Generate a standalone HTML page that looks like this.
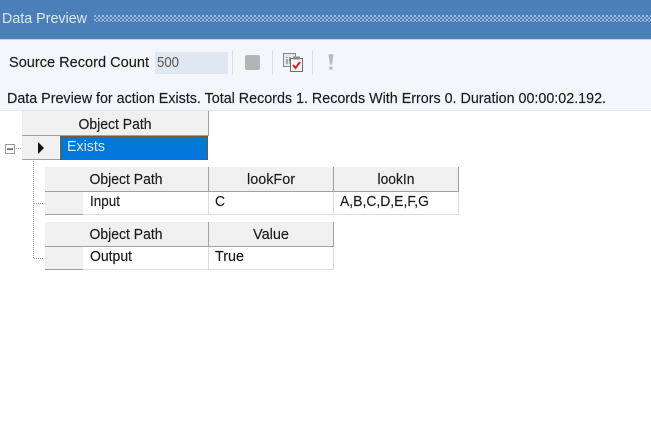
<!DOCTYPE html>
<html><head><meta charset="utf-8"><style>
html,body{margin:0;padding:0;background:#fff;width:651px;height:440px;overflow:hidden}
svg{display:block}
text{font-family:"Liberation Sans",sans-serif;font-size:15px;fill:#1a1a1a;stroke:#1a1a1a;stroke-width:.15px}
.c{text-anchor:middle}
</style></head><body>
<svg width="651" height="440" viewBox="0 0 651 440" xmlns="http://www.w3.org/2000/svg">
<defs><pattern id="d" width="4" height="4" patternUnits="userSpaceOnUse" x="94" y="15"><rect width="2" height="2" x="0" y="0" fill="#9dbbdc"/><rect width="2" height="2" x="2" y="2" fill="#8fb0d4"/></pattern></defs>
<rect width="651" height="440" fill="#fff"/>
<rect width="651" height="39" fill="#4a80b7"/>
<rect y="39" width="651" height="1" fill="#c3d3e6"/>
<rect y="40" width="651" height="70" fill="#f3f6fa"/>
<rect y="110" width="651" height="1" fill="#e2e4e6"/>
<text x="2" y="23" style="fill:#dfe9f4;stroke:none" textLength="85" lengthAdjust="spacingAndGlyphs">Data Preview</text>
<rect x="94" y="15" width="557" height="7" fill="url(#d)"/>

<text x="9" y="67" textLength="140" lengthAdjust="spacingAndGlyphs">Source Record Count</text>
<rect x="155" y="52" width="73" height="22" fill="#dfe7f0"/>
<text x="157" y="67" style="fill:#555;stroke:none" textLength="22" lengthAdjust="spacingAndGlyphs">500</text>
<rect x="232" y="50" width="1" height="25" fill="#dcdfe2"/>
<rect x="272" y="50" width="1" height="25" fill="#dcdfe2"/>
<rect x="312" y="50" width="1" height="25" fill="#dcdfe2"/>
<rect x="245" y="55" width="15" height="15" rx="2" fill="#b4b4b4"/>

<rect x="283.500" y="53.500" width="12" height="13" fill="#e4e8ee" stroke="#7d8792"/>
<path d="M287 57v1M287 59v5M289 60h3M290 57v7" stroke="#5a6a7a" fill="none"/>
<rect x="290.500" y="58.500" width="12" height="13" fill="#f4f4f4" stroke="#6d6d6d"/>
<rect x="293" y="56.500" width="7" height="3" fill="#8a8a8a"/>
<path d="M293 65l2.500 3 4.500-6" stroke="#d9232e" stroke-width="2" fill="none"/>

<path d="M328.500 55.500c0-2 5-2 5 0l-1.500 9h-2z" fill="#bcbcbc"/>
<circle cx="331" cy="68" r="1.800" fill="#bcbcbc"/>

<text x="7" y="103" textLength="599" lengthAdjust="spacingAndGlyphs">Data Preview for action Exists. Total Records 1. Records With Errors 0. Duration 00:00:02.192.</text>

<!-- main grid -->
<rect x="22" y="111" width="187" height="24" fill="#f0f0f0"/>
<rect x="208" y="111" width="1" height="24" fill="#a0a0a0"/>
<rect x="22" y="135" width="187" height="1" fill="#a0a0a0"/>
<text class="c" x="115" y="129" textLength="73" lengthAdjust="spacingAndGlyphs">Object Path</text>
<rect x="22" y="136" width="37" height="24" fill="#f0f0f0"/>
<rect x="22" y="159" width="38" height="1" fill="#a0a0a0"/>
<path d="M38 142l6 6-6 6z" fill="#111"/>
<rect x="60" y="136" width="148" height="24" fill="#0078d7"/>
<rect x="60.500" y="136.500" width="147" height="23" fill="none" stroke="#c8823a" stroke-dasharray="1 1"/>
<rect x="60.500" y="136.500" width="147" height="23" fill="none" stroke="#2c2c2c" stroke-dasharray="1 1" stroke-dashoffset="1"/>
<text x="67" y="151" style="fill:#dcebf9;stroke:none" textLength="38" lengthAdjust="spacingAndGlyphs">Exists</text>

<rect x="5.500" y="144.500" width="9" height="9" fill="#fff" stroke="#9a9a9a"/>
<rect x="7" y="148.500" width="6" height="1.200" fill="#333"/>
<path d="M16 148.500h6" stroke="#999" stroke-dasharray="1 1"/>
<path d="M33.500 161v97.500h10M34 203.500h10" stroke="#999" fill="none" stroke-dasharray="1 1"/>

<!-- child grid 1 -->
<rect x="45" y="167" width="414" height="24" fill="#f0f0f0"/>
<rect x="45" y="191" width="414" height="1" fill="#a0a0a0"/>
<rect x="208" y="167" width="1" height="24" fill="#a0a0a0"/>
<rect x="333" y="167" width="1" height="24" fill="#a0a0a0"/>
<rect x="458" y="167" width="1" height="24" fill="#a0a0a0"/>
<rect x="45" y="192" width="38" height="22" fill="#f0f0f0"/>
<rect x="45" y="214" width="38" height="1" fill="#a0a0a0"/>
<rect x="83" y="214" width="376" height="1" fill="#dcdcdc"/>
<rect x="208" y="192" width="1" height="22" fill="#dcdcdc"/>
<rect x="333" y="192" width="1" height="22" fill="#dcdcdc"/>
<rect x="458" y="192" width="1" height="22" fill="#dcdcdc"/>
<text class="c" x="126" y="184" textLength="73" lengthAdjust="spacingAndGlyphs">Object Path</text>
<text class="c" x="271" y="184" textLength="48" lengthAdjust="spacingAndGlyphs">lookFor</text>
<text class="c" x="396" y="184" textLength="37" lengthAdjust="spacingAndGlyphs">lookIn</text>
<text x="90" y="206" textLength="30" lengthAdjust="spacingAndGlyphs">Input</text>
<text x="215" y="206" textLength="10" lengthAdjust="spacingAndGlyphs">C</text>
<text x="340" y="206" textLength="89" lengthAdjust="spacingAndGlyphs">A,B,C,D,E,F,G</text>

<!-- child grid 2 -->
<rect x="45" y="222" width="289" height="24" fill="#f0f0f0"/>
<rect x="45" y="246" width="289" height="1" fill="#a0a0a0"/>
<rect x="208" y="222" width="1" height="24" fill="#a0a0a0"/>
<rect x="333" y="222" width="1" height="24" fill="#a0a0a0"/>
<rect x="45" y="247" width="38" height="22" fill="#f0f0f0"/>
<rect x="45" y="269" width="38" height="1" fill="#a0a0a0"/>
<rect x="83" y="269" width="251" height="1" fill="#dcdcdc"/>
<rect x="208" y="247" width="1" height="22" fill="#dcdcdc"/>
<rect x="333" y="247" width="1" height="22" fill="#dcdcdc"/>
<text class="c" x="126" y="239" textLength="73" lengthAdjust="spacingAndGlyphs">Object Path</text>
<text class="c" x="271" y="239" textLength="36" lengthAdjust="spacingAndGlyphs">Value</text>
<text x="90" y="261" textLength="42" lengthAdjust="spacingAndGlyphs">Output</text>
<text x="215" y="261" textLength="29" lengthAdjust="spacingAndGlyphs">True</text>
</svg>
</body></html>
